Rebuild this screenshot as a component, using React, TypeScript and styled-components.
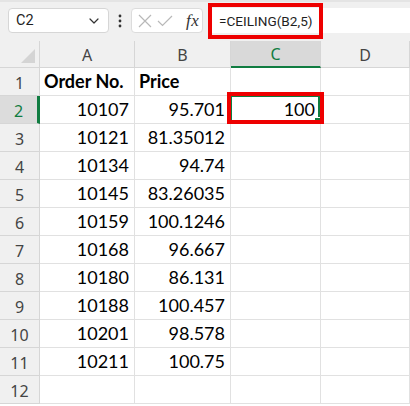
import { Fragment } from "react";
import { ChevronDown } from "lucide-react";
import styled, { createGlobalStyle } from "styled-components";

const GlobalStyle = createGlobalStyle`
  html, body {
    margin: 0;
    padding: 0;
    background: #ffffff;
  }
  body {
    width: 410px;
    height: 406px;
    overflow: hidden;
  }
`;

const Page = styled.div`
  width: 410px;
  height: 406px;
  overflow: hidden;
  background: #ffffff;
`;

const Toolbar = styled.div`
  display: flex;
  align-items: stretch;
  height: 41px;
  box-sizing: border-box;
  padding: 6px 0 8px 8px;
  background: #f0f0f0;
  border-top: 2px solid #e4e4e4;
`;

const NameBox = styled.div`
  width: 101px;
  height: 25px;
  box-sizing: border-box;
  display: flex;
  align-items: center;
  justify-content: space-between;
  padding: 0 6px 0 7px;
  background: #ffffff;
  border: 1px solid #d6d6d6;
  border-radius: 4px;
  font-family: Roboto, "Noto Sans", sans-serif;
  font-size: 14.5px;
  color: #1f1f1f;
`;

const Dots = styled.div`
  width: 22px;
  display: flex;
  align-items: center;
  justify-content: center;
`;

const IconBox = styled.div`
  width: 72px;
  height: 25px;
  box-sizing: border-box;
  display: flex;
  align-items: center;
  gap: 5px;
  padding: 0 0 0 6px;
  background: #ffffff;
  border: 1px solid #dcdcdc;
  border-radius: 4px;
`;

const Fx = styled.span`
  font-family: "Liberation Serif", serif;
  font-style: italic;
  font-size: 17px;
  color: #333;
  margin-left: 8px;
  letter-spacing: 0.5px;
`;

const FormulaBar = styled.div`
  position: relative;
  flex: 1;
  height: 25px;
  margin-left: 6px;
  display: flex;
  align-items: center;
  padding-left: 10px;
  background: #ffffff;
  font-family: Roboto, "Noto Sans", sans-serif;
  font-size: 13.6px;
  color: #1f1f1f;
`;

const Highlight = styled.div<{ $top: number; $left: number; $w: number; $h: number }>`
  position: absolute;
  top: ${(p) => p.$top}px;
  left: ${(p) => p.$left}px;
  width: ${(p) => p.$w}px;
  height: ${(p) => p.$h}px;
  box-sizing: border-box;
  border: 4px solid #ee0000;
  pointer-events: none;
  z-index: 3;
`;

const Sheet = styled.div`
  display: grid;
  grid-template-columns: 40px 95px 96px 90px 89px;
  grid-template-rows: 27px;
  grid-auto-rows: 28px;
`;

const Corner = styled.div`
  position: relative;
  background: #f0f0f0;
  border-right: 1px solid #d6d6d6;
  border-bottom: 1px solid #d6d6d6;
  box-sizing: border-box;
  svg {
    position: absolute;
    right: 4px;
    bottom: 4px;
  }
`;

const ColHead = styled.div<{ $active?: boolean }>`
  display: flex;
  align-items: center;
  justify-content: center;
  box-sizing: border-box;
  background: ${(p) => (p.$active ? "#d9d9d9" : "#f0f0f0")};
  border-right: 1px solid #d6d6d6;
  border-bottom: ${(p) => (p.$active ? "2px solid #107c41" : "1px solid #d6d6d6")};
  font-family: "Noto Sans", sans-serif;
  font-size: 16px;
  color: ${(p) => (p.$active ? "#107c41" : "#444444")};
  padding-top: 1px;
`;

const RowHead = styled.div<{ $active?: boolean }>`
  display: flex;
  align-items: center;
  justify-content: center;
  box-sizing: border-box;
  background: ${(p) => (p.$active ? "#dcdcdc" : "#f0f0f0")};
  border-right: ${(p) => (p.$active ? "3px solid #107c41" : "1px solid #d6d6d6")};
  border-bottom: 1px solid #d6d6d6;
  font-family: "Noto Sans", sans-serif;
  font-size: 16px;
  color: ${(p) => (p.$active ? "#107c41" : "#444444")};
  padding-top: 2px;
`;

const Cell = styled.div<{ $num?: boolean; $bold?: boolean }>`
  position: relative;
  display: flex;
  align-items: flex-end;
  justify-content: ${(p) => (p.$num ? "flex-end" : "flex-start")};
  box-sizing: border-box;
  padding: 0 5px 3px 4px;
  border-right: 1px solid #e1e1e1;
  border-bottom: 1px solid #e1e1e1;
  font-family: Lato, "Liberation Sans", sans-serif;
  font-size: 18px;
  font-weight: ${(p) => (p.$bold ? 700 : 400)};
  color: #000000;
  white-space: nowrap;
`;

const Selection = styled.div`
  position: absolute;
  inset: -1px 0 0 -1px;
  border: 2px solid #107c41;
  pointer-events: none;
  &::after {
    content: "";
    position: absolute;
    right: -3px;
    bottom: -3px;
    width: 5px;
    height: 5px;
    background: #107c41;
    border: 1px solid #ffffff;
  }
`;

const rows: [string, string][] = [
  ["10107", "95.701"],
  ["10121", "81.35012"],
  ["10134", "94.74"],
  ["10145", "83.26035"],
  ["10159", "100.1246"],
  ["10168", "96.667"],
  ["10180", "86.131"],
  ["10188", "100.457"],
  ["10201", "98.578"],
  ["10211", "100.75"],
];

export default function App() {
  return (
    <Page>
      <GlobalStyle />
      <Toolbar>
        <NameBox>
          <span>C2</span>
          <ChevronDown size={16} strokeWidth={1.8} color="#333" />
        </NameBox>
        <Dots>
          <svg width="4" height="14" viewBox="0 0 4 14">
            <circle cx="2" cy="2" r="1.4" fill="#333" />
            <circle cx="2" cy="7" r="1.4" fill="#333" />
            <circle cx="2" cy="12" r="1.4" fill="#333" />
          </svg>
        </Dots>
        <IconBox>
          <svg width="14" height="14" viewBox="0 0 14 14">
            <path d="M1 1 L13 13 M13 1 L1 13" stroke="#b8b8b8" strokeWidth="1.2" fill="none" />
          </svg>
          <svg width="16" height="12" viewBox="0 0 16 12">
            <path d="M1 6 L5.5 10.5 L15 1" stroke="#b8b8b8" strokeWidth="1.2" fill="none" />
          </svg>
          <Fx>fx</Fx>
        </IconBox>
        <FormulaBar>
          =CEILING(B2,5)
          <Highlight $top={-5} $left={-1} $w={115} $h={36} />
        </FormulaBar>
      </Toolbar>
      <Sheet>
        <Corner>
          <svg width="14" height="14" viewBox="0 0 14 14">
            <polygon points="14,0 14,14 0,14" fill="#d4d4d4" />
          </svg>
        </Corner>
        <ColHead>A</ColHead>
        <ColHead>B</ColHead>
        <ColHead $active>C</ColHead>
        <ColHead>D</ColHead>

        <RowHead>1</RowHead>
        <Cell $bold>Order No.</Cell>
        <Cell $bold>Price</Cell>
        <Cell />
        <Cell />

        {rows.map(([a, b], i) => (
          <Fragment key={a}>
            <RowHead $active={i === 0}>{i + 2}</RowHead>
            <Cell $num>{a}</Cell>
            <Cell $num>{b}</Cell>
            <Cell $num>
              {i === 0 && (
                <>
                  100
                  <Selection />
                  <Highlight $top={-4} $left={-4} $w={97} $h={32} />
                </>
              )}
            </Cell>
            <Cell />
          </Fragment>
        ))}

        <RowHead>12</RowHead>
        <Cell />
        <Cell />
        <Cell />
        <Cell />
      </Sheet>
    </Page>
  );
}
